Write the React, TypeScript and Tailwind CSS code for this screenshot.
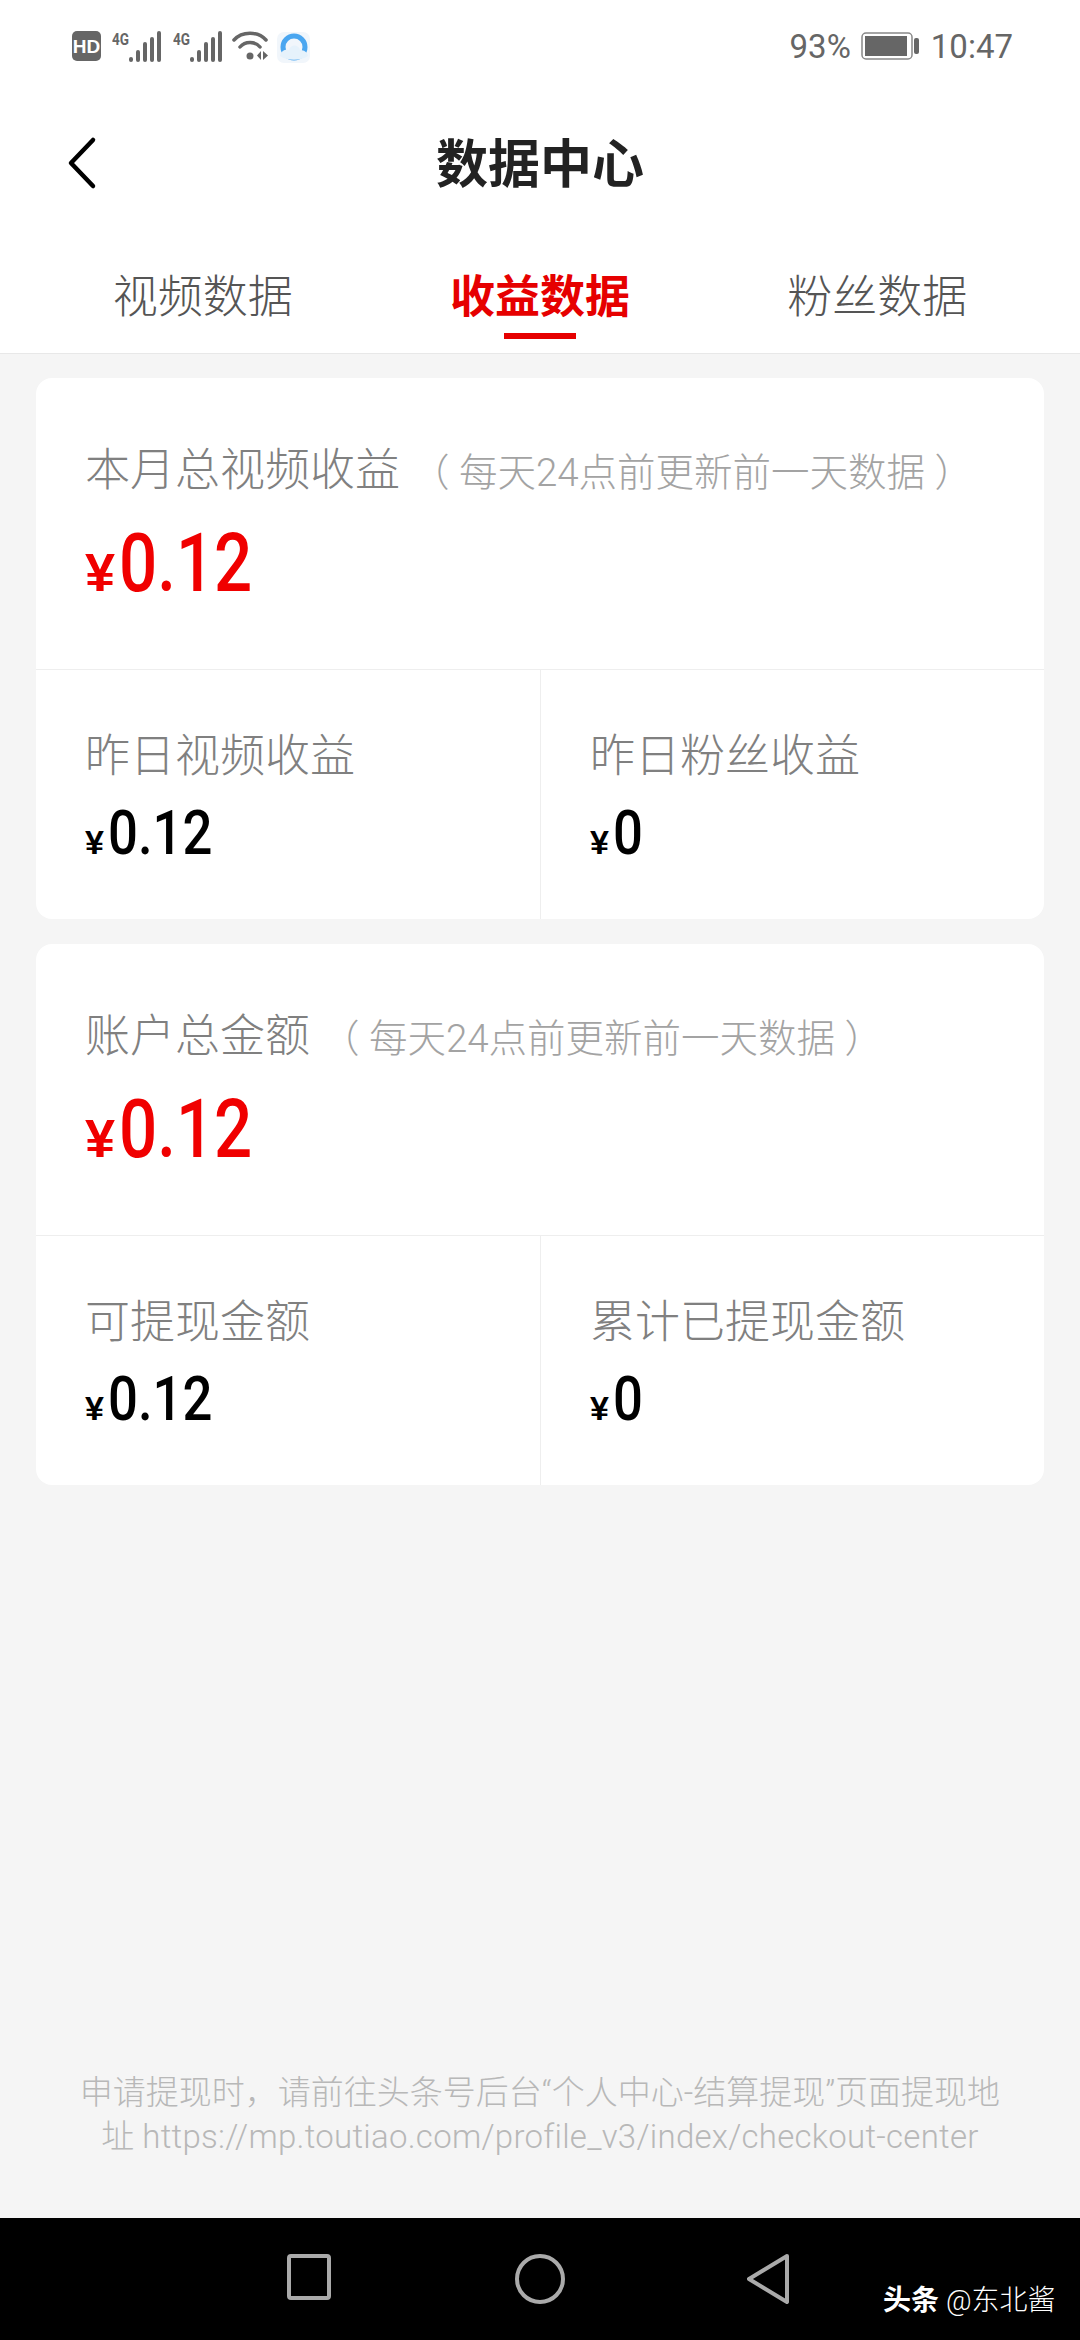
const yen = "font-['Liberation_Sans',sans-serif] font-bold";
const digits = "inline-block origin-left font-medium";
const note = "（ 每天24点前更新前一天数据 ）";

function Signal() {
  return (
    <svg width="50" height="31" viewBox="0 0 50 31" fill="#666">
      <text x="0" y="14" fontSize="16" fontWeight="700" textLength="17" lengthAdjust="spacingAndGlyphs" fontFamily="Roboto, sans-serif">4G</text>
      <rect x="17" y="26" width="4" height="5" rx="2" />
      <rect x="24" y="19" width="4" height="12" rx="2" />
      <rect x="31" y="11" width="4" height="20" rx="2" />
      <rect x="38" y="6" width="4" height="25" rx="2" />
      <rect x="45" y="0" width="4" height="31" rx="2" />
    </svg>
  );
}

function StatusBar() {
  return (
    <div className="flex h-[92px] items-center justify-between pl-[72px] pr-[67px]">
      <div className="flex items-center">
        <svg width="29" height="30" viewBox="0 0 29 30">
          <rect width="29" height="30" rx="5" fill="#666" />
          <text x="14.5" y="21.5" textAnchor="middle" fontSize="19" fontWeight="700" fill="#fff" fontFamily="Liberation Sans, sans-serif">HD</text>
        </svg>
        <div className="ml-[11px]"><Signal /></div>
        <div className="ml-[11px]"><Signal /></div>
        <svg className="ml-[9px]" width="36" height="30" viewBox="0 0 36 30" fill="none" stroke="#666" strokeWidth="3.5" strokeLinecap="round">
          <path d="M2 9C10 0 26 0 34 9" />
          <path d="M8 16C13 10 23 10 28 16" />
          <circle cx="18" cy="25" r="3.5" fill="#666" stroke="none" />
          <path d="M29 20v9l-4-4.500z" fill="#666" stroke="none" />
          <path d="M31 20v9l5-4.500z" fill="#666" stroke="none" />
        </svg>
        <svg className="ml-[9px] mt-[2px]" width="33" height="31" viewBox="0 0 33 31" fill="none">
          <rect width="33" height="31" rx="7" fill="#f1f6fb" />
          <circle cx="17" cy="15" r="11" stroke="#4aa6f0" strokeWidth="5" />
          <path d="M3 24c1-6 6-7 9-6 1-6 10-6 11 0 4 0 7 2 8 6-7 5-21 5-28 0z" fill="#e6f2fb" />
        </svg>
      </div>
      <div className="flex items-center text-[#666]">
        <span className="text-[33px] leading-none">93%</span>
        <svg className="ml-[10px]" width="58" height="28" viewBox="0 0 58 28">
          <rect x="1" y="1" width="50" height="26" rx="4" fill="none" stroke="#888" strokeWidth="1.5" />
          <rect x="4" y="4" width="42" height="20" fill="#666" />
          <rect x="53" y="6" width="5" height="16" rx="2" fill="#666" />
        </svg>
        <span className="ml-[12px] text-[33px] leading-none">10:47</span>
      </div>
    </div>
  );
}

function Header() {
  const tabs = ["视频数据", "收益数据", "粉丝数据"];
  return (
    <div className="border-b border-[#e8e8e8] bg-white">
      <StatusBar />
      <div className="relative flex h-[148px] items-center justify-center">
        <svg
          className="absolute left-[66px] top-[44px]"
          width="32"
          height="54"
          viewBox="0 0 32 54"
          fill="none"
          stroke="#000"
          strokeWidth="4.500"
          strokeLinecap="round"
          strokeLinejoin="round"
        >
          <path d="M27 4L5 27l22 23" />
        </svg>
        <h1 className="text-[52px] font-bold leading-none text-[#222]">数据中心</h1>
      </div>
      <div className="grid h-[113px] grid-cols-3 px-[34px]">
        {tabs.map((tab, i) => (
          <div key={tab} className="flex flex-col items-center">
            <span
              className={`pt-[33px] text-[45px] leading-[50px] ${
                i === 1 ? "font-bold text-[#e60000]" : "font-light text-[#555]"
              }`}
            >
              {tab}
            </span>
            {i === 1 && <div className="mt-[10px] h-[6px] w-[72px] bg-[#e60000]" />}
          </div>
        ))}
      </div>
    </div>
  );
}

function Stat({ label, value, bordered }: { label: string; value: string; bordered?: boolean }) {
  return (
    <div className={`pl-[49px] pt-[60px] ${bordered ? "border-r border-[#eee]" : ""}`}>
      <p className="text-[45px] font-light leading-[54px] text-[#808080]">{label}</p>
      <p className="mt-[17px] flex items-baseline leading-[64px] text-black">
        <span className={`text-[34px] ${yen}`}>¥</span>
        <span className={`ml-[4px] scale-x-[0.85] text-[62px] ${digits}`}>{value}</span>
      </p>
    </div>
  );
}

function IncomeCard({
  title,
  left,
  right,
}: {
  title: string;
  left: { label: string; value: string };
  right: { label: string; value: string };
}) {
  return (
    <section className="overflow-hidden rounded-[16px] bg-white">
      <div className="h-[292px] border-b border-[#eee] pl-[49px] pt-[66px]">
        <p className="flex items-baseline leading-[54px]">
          <span className="text-[45px] font-light text-[#808080]">{title}</span>
          <span className="ml-[11px] whitespace-pre text-[38.5px] font-light text-[#a3a3a3]">{note}</span>
        </p>
        <p className="mt-[19px] flex items-baseline leading-[90px] text-[#f00000]">
          <span className={`text-[54px] ${yen}`}>¥</span>
          <span className={`ml-[4px] scale-x-[0.83] text-[81px] ${digits}`}>0.12</span>
        </p>
      </div>
      <div className="grid h-[249px] grid-cols-[505px_1fr]">
        <Stat {...left} bordered />
        <Stat {...right} />
      </div>
    </section>
  );
}

export default function App() {
  return (
    <div className="flex h-[2340px] w-[1080px] flex-col bg-[#f5f5f5] font-['Roboto','Noto_Sans_CJK_SC',sans-serif]">
      <Header />
      <main className="flex flex-1 flex-col gap-[25px] px-[36px] pt-[24px]">
        <IncomeCard
          title="本月总视频收益"
          left={{ label: "昨日视频收益", value: "0.12" }}
          right={{ label: "昨日粉丝收益", value: "0" }}
        />
        <IncomeCard
          title="账户总金额"
          left={{ label: "可提现金额", value: "0.12" }}
          right={{ label: "累计已提现金额", value: "0" }}
        />
        <p className="mx-auto mb-[59px] mt-auto w-[940px] text-center text-[33px] font-light leading-[44px] text-[#b8b8b8]">
          申请提现时，请前往头条号后台“个人中心-结算提现”页面提现地址{" "}
          <span className="tracking-[0.27px]">https://mp.toutiao.com/profile_v3/index/checkout-center</span>
        </p>
      </main>
      <nav className="flex h-[122px] items-start bg-black pl-[287px] pt-[36px]">
        <svg width="44" height="46" viewBox="0 0 44 46" fill="none" stroke="#aaa" strokeWidth="4">
          <rect x="2" y="2" width="40" height="42" rx="2" />
        </svg>
        <svg className="ml-[184px]" width="50" height="50" viewBox="0 0 50 50" fill="none" stroke="#aaa" strokeWidth="4">
          <circle cx="25" cy="25" r="23" />
        </svg>
        <svg className="ml-[182px]" width="43" height="50" viewBox="0 0 43 50" fill="none" stroke="#aaa" strokeWidth="4" strokeLinejoin="round">
          <path d="M40 2L2 25l38 23z" />
        </svg>
        <p className="ml-[93px] mt-[31px] whitespace-nowrap text-[28px] leading-[32px] text-white">
          <span className="font-bold">头条</span> <span className="font-light">@东北酱</span>
        </p>
      </nav>
    </div>
  );
}
